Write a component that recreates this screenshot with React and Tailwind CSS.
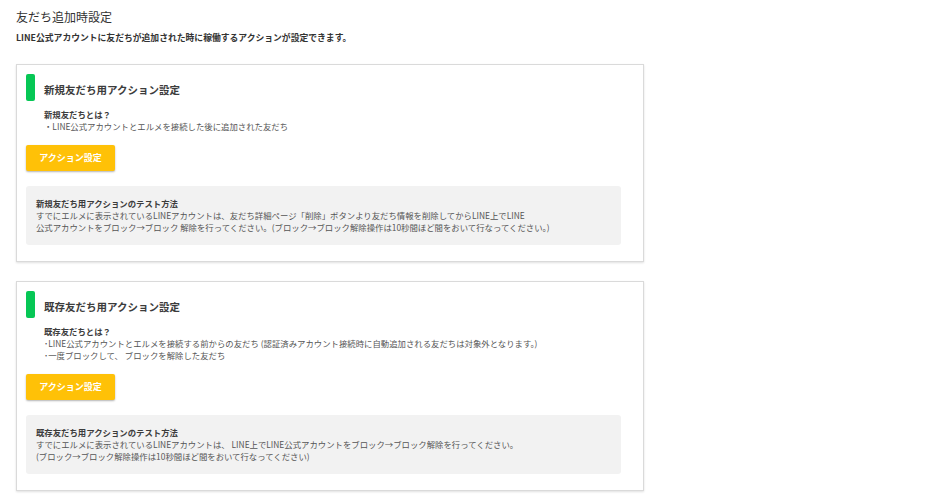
import React from "react";

const font = { fontFamily: '"Noto Sans CJK JP", "Noto Sans", sans-serif' };

function Card({ title, heading, lines, testTitle, testLines }) {
  return (
    <div className="border border-[#dadada] bg-white shadow-[0_1px_2px_rgba(0,0,0,0.12)] pl-[9px] pr-[22px] pt-[9px] pb-[16px]">
      <div className="flex items-start">
        <div className="w-[9px] h-[27px] rounded-[2px] bg-[#06c755]" />
        <div className="ml-[9px] pt-[9px] text-[10.5px] leading-[14px] font-bold text-[#3c3c3c]">{title}</div>
      </div>
      <div className="pl-[18px] mt-[7px] text-[8.4px] leading-[12px] text-[#555]">
        <div className="font-bold text-[#3c3c3c]">{heading}</div>
        {lines.map((l, i) => (
          <div key={i}>{l}</div>
        ))}
      </div>
      <button className="mt-[13px] w-[89px] h-[26px] rounded-[2px] bg-[#ffc107] shadow-[0_1px_2px_rgba(0,0,0,0.3)] text-white text-[9px] font-bold flex items-center justify-center">
        アクション設定
      </button>
      <div className="mt-[15px] rounded-[3px] bg-[#f2f2f2] pl-[10px] pt-[11px] pb-[12px] text-[8.4px] leading-[12px] text-[#555]">
        <div className="font-bold text-[#3c3c3c]">{testTitle}</div>
        {testLines.map((l, i) => (
          <div key={i}>{l}</div>
        ))}
      </div>
    </div>
  );
}

export default function App() {
  return (
    <div style={font} className="bg-white w-[940px] h-[500px] pl-[16px] pt-[9px]">
      <div className="w-[628px]">
        <h1 className="text-[12px] leading-[16px] text-[#333]">友だち追加時設定</h1>
        <p className="mt-[7px] text-[8.8px] leading-[12px] font-bold text-[#333]">
          LINE公式アカウントに友だちが追加された時に稼働するアクションが設定できます。
        </p>
        <div className="mt-[20px]">
          <Card
            title="新規友だち用アクション設定"
            heading="新規友だちとは？"
            lines={["・LINE公式アカウントとエルメを接続した後に追加された友だち"]}
            testTitle="新規友だち用アクションのテスト方法"
            testLines={[
              "すでにエルメに表示されているLINEアカウントは、友だち詳細ページ「削除」ボタンより友だち情報を削除してからLINE上でLINE",
              "公式アカウントをブロック→ブロック 解除を行ってください。(ブロック→ブロック解除操作は10秒間ほど間をおいて行なってください。)",
            ]}
          />
        </div>
        <div className="mt-[19px]">
          <Card
            title="既存友だち用アクション設定"
            heading="既存友だちとは？"
            lines={[
              "･LINE公式アカウントとエルメを接続する前からの友だち (認証済みアカウント接続時に自動追加される友だちは対象外となります。)",
              "･一度ブロックして、 ブロックを解除した友だち",
            ]}
            testTitle="既存友だち用アクションのテスト方法"
            testLines={[
              "すでにエルメに表示されているLINEアカウントは、 LINE上でLINE公式アカウントをブロック→ブロック解除を行ってください。",
              "(ブロック→ブロック解除操作は10秒間ほど間をおいて行なってください)",
            ]}
          />
        </div>
      </div>
    </div>
  );
}
